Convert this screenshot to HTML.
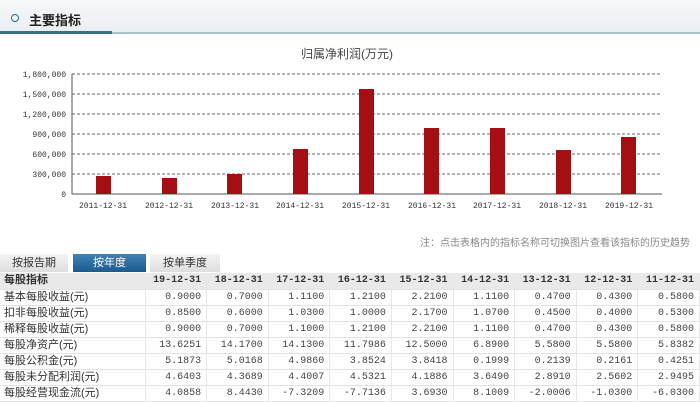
<!DOCTYPE html>
<html><head><meta charset="utf-8"><style>
*{margin:0;padding:0;box-sizing:border-box}
body{width:700px;height:401px;overflow:hidden;background:#fff;font-family:"Liberation Sans","Noto Sans CJK SC",sans-serif;position:relative}
.hd{position:absolute;left:0;top:0;width:700px;height:34px;background:linear-gradient(#f6f8fa,#e9eef2)}
.hd .l1{position:absolute;left:0;top:31px;width:112px;height:3px;background:#3c6f86}
.hd .l2{position:absolute;left:112px;top:32px;width:588px;height:2px;background:#a9c3cf}
.hd .c{position:absolute;left:11px;top:14px;width:8px;height:8px;border:1.5px solid #2d6d8e;border-radius:50%}
.hd .t{position:absolute;left:29px;top:10px;font-size:13px;font-weight:bold;color:#222}
.note{position:absolute;right:10px;top:234px;font-size:10px;color:#888}
.tab{position:absolute;top:254px;height:18px;font-size:11px;line-height:18px;text-align:center;color:#333;background:linear-gradient(#f4f4f4,#dedede)}
.tab.on{background:linear-gradient(#3e82b8,#1d5a8c);color:#fff}
table{position:absolute;left:0;top:273px;width:700px;border-collapse:collapse;font-size:10px;table-layout:fixed}
td{height:16px;line-height:15px;border-bottom:1px solid #e2e2e2;border-right:1px solid #e8e8e8;padding:0 5px;text-align:right;color:#444;font-family:"Liberation Mono","Noto Sans CJK SC",monospace;white-space:nowrap;overflow:hidden}
td:first-child{text-align:left;width:145px;font-family:"Liberation Sans","Noto Sans CJK SC",sans-serif;color:#333;font-size:11px;padding-left:4px}
tr.h td{background:#e9e9e9;font-weight:bold;color:#333}
</style></head><body>
<div class="hd"><div class="c"></div><div class="t">主要指标</div><div class="l1"></div><div class="l2"></div></div>
<svg style="position:absolute;left:0;top:34px" width="700" height="200" font-family="Liberation Mono, monospace" font-size="8" fill="#333">
<text x="347" y="24" font-size="12" text-anchor="middle" fill="#444" font-family="Liberation Sans, Noto Sans CJK SC, sans-serif">归属净利润(万元)</text>
<g stroke="#333" stroke-dasharray="3,2" stroke-width="0.8">
<line x1="72" y1="40" x2="662" y2="40"/><line x1="72" y1="60" x2="662" y2="60"/><line x1="72" y1="80" x2="662" y2="80"/><line x1="72" y1="100" x2="662" y2="100"/><line x1="72" y1="120" x2="662" y2="120"/><line x1="72" y1="140" x2="662" y2="140"/>
</g>
<g text-anchor="end">
<text x="66" y="43">1,800,000</text><text x="66" y="63">1,500,000</text><text x="66" y="83">1,200,000</text><text x="66" y="103">900,000</text><text x="66" y="123">600,000</text><text x="66" y="143">300,000</text><text x="66" y="163">0</text>
</g>
<line x1="72" y1="40" x2="72" y2="160" stroke="#555"/><line x1="72" y1="160" x2="662" y2="160" stroke="#555"/>
<g fill="#a30f13">
<rect x="96" y="142" width="15" height="18"/><rect x="162" y="144" width="15" height="16"/><rect x="227" y="140" width="15" height="20"/><rect x="293" y="115" width="15" height="45"/><rect x="359" y="55" width="15" height="105"/><rect x="424" y="94" width="15" height="66"/><rect x="490" y="94" width="15" height="66"/><rect x="556" y="116" width="15" height="44"/><rect x="621" y="103" width="15" height="57"/>
</g>
<g text-anchor="middle">
<text x="103" y="174">2011-12-31</text><text x="169" y="174">2012-12-31</text><text x="235" y="174">2013-12-31</text><text x="300" y="174">2014-12-31</text><text x="366" y="174">2015-12-31</text><text x="432" y="174">2016-12-31</text><text x="497" y="174">2017-12-31</text><text x="563" y="174">2018-12-31</text><text x="629" y="174">2019-12-31</text>
</g>
</svg>
<div class="note">注：点击表格内的指标名称可切换图片查看该指标的历史趋势</div>
<div class="tab" style="left:0;width:68px">按报告期</div>
<div class="tab on" style="left:73px;width:73px">按年度</div>
<div class="tab" style="left:150px;width:70px">按单季度</div>
<table>
<colgroup><col style="width:145px"><col span="9" style="width:61.6px"></colgroup>
<tr class="h"><td>每股指标</td><td>19-12-31</td><td>18-12-31</td><td>17-12-31</td><td>16-12-31</td><td>15-12-31</td><td>14-12-31</td><td>13-12-31</td><td>12-12-31</td><td>11-12-31</td></tr>
<tr><td>基本每股收益(元)</td><td>0.9000</td><td>0.7000</td><td>1.1100</td><td>1.2100</td><td>2.2100</td><td>1.1100</td><td>0.4700</td><td>0.4300</td><td>0.5800</td></tr>
<tr><td>扣非每股收益(元)</td><td>0.8500</td><td>0.6000</td><td>1.0300</td><td>1.0000</td><td>2.1700</td><td>1.0700</td><td>0.4500</td><td>0.4000</td><td>0.5300</td></tr>
<tr><td>稀释每股收益(元)</td><td>0.9000</td><td>0.7000</td><td>1.1000</td><td>1.2100</td><td>2.2100</td><td>1.1100</td><td>0.4700</td><td>0.4300</td><td>0.5800</td></tr>
<tr><td>每股净资产(元)</td><td>13.6251</td><td>14.1700</td><td>14.1300</td><td>11.7986</td><td>12.5000</td><td>6.8900</td><td>5.5800</td><td>5.5800</td><td>5.8382</td></tr>
<tr><td>每股公积金(元)</td><td>5.1873</td><td>5.0168</td><td>4.9860</td><td>3.8524</td><td>3.8418</td><td>0.1999</td><td>0.2139</td><td>0.2161</td><td>0.4251</td></tr>
<tr><td>每股未分配利润(元)</td><td>4.6403</td><td>4.3689</td><td>4.4007</td><td>4.5321</td><td>4.1886</td><td>3.6490</td><td>2.8910</td><td>2.5602</td><td>2.9495</td></tr>
<tr><td>每股经营现金流(元)</td><td>4.0858</td><td>8.4430</td><td>-7.3209</td><td>-7.7136</td><td>3.6930</td><td>8.1009</td><td>-2.0006</td><td>-1.0300</td><td>-6.0300</td></tr>
</table>
</body></html>
